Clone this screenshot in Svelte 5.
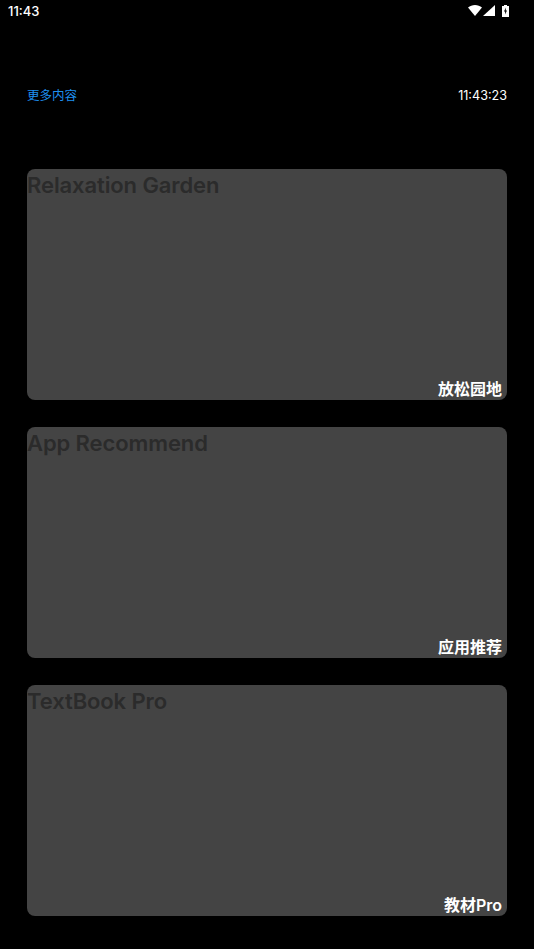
<script>
    const cards = [
        { title: 'Relaxation Garden', label: '放松园地' },
        { title: 'App Recommend', label: '应用推荐' },
        { title: 'TextBook Pro', label: '教材Pro' }
    ];
</script>

<div class="screen">
    <div class="status">
        <span class="clock">11:43</span>
        <div class="icons">
            <svg class="wifi" width="14" height="11" viewBox="0 0 14 11"><path d="M0 2.6C2 .9 4.4 0 7 0s5 .9 7 2.6L7 11z" fill="#fff"/></svg>
            <svg class="signal" width="12" height="11" viewBox="0 0 12 11"><path d="M12 0v11H0z" fill="#fff"/></svg>
            <svg width="7" height="12" viewBox="0 0 7 12"><path d="M2 0h3v1h2v11H0V1h2z" fill="#fff"/><path d="M3.9 2.6 2 6.6h1.2L3 9.6l2-4H3.7z" fill="#000"/></svg>
        </div>
    </div>

    <div class="top">
        <span class="more">更多内容</span>
        <span class="time">11:43:23</span>
    </div>

    <div class="cards">
        {#each cards as card}
            <div class="card">
                <div class="title">{card.title}</div>
                <div class="label">{card.label}</div>
            </div>
        {/each}
    </div>
</div>

<style>
    :global(body) {
        background: #000;
    }

    .screen {
        height: 949px;
        overflow: hidden;
        background: #000;
        color: #fff;
        font-family: Inter, "Noto Sans CJK SC", sans-serif;
    }

    .status {
        display: flex;
        justify-content: space-between;
        align-items: center;
        height: 21px;
        padding: 0 25px 0 8px;
    }

    .clock {
        font-size: 13px;
        font-weight: 500;
    }

    .icons {
        display: flex;
        align-items: center;
        gap: 1px;
    }

    .signal {
        margin-right: 6px;
    }

    .top {
        display: flex;
        justify-content: space-between;
        align-items: center;
        height: 20px;
        margin: 64px 27px 0;
    }

    .more {
        margin-bottom: 2px;
        font-family: "Noto Sans CJK SC", sans-serif;
        font-size: 12.5px;
        color: #1e90f0;
    }

    .time {
        font-size: 12.6px;
        color: #fff;
    }

    .cards {
        display: flex;
        flex-direction: column;
        gap: 27px;
        margin: 64px 27px 0;
    }

    .card {
        display: flex;
        flex-direction: column;
        justify-content: space-between;
        height: 231px;
        border-radius: 8px;
        background: #444;
    }

    .title {
        font-size: 22px;
        font-weight: 600;
        letter-spacing: -0.1px;
        line-height: 33px;
        color: #2b2b2b;
    }

    .label {
        align-self: flex-end;
        padding-right: 5px;
        font-size: 16px;
        font-weight: 600;
        line-height: 21px;
    }
</style>
